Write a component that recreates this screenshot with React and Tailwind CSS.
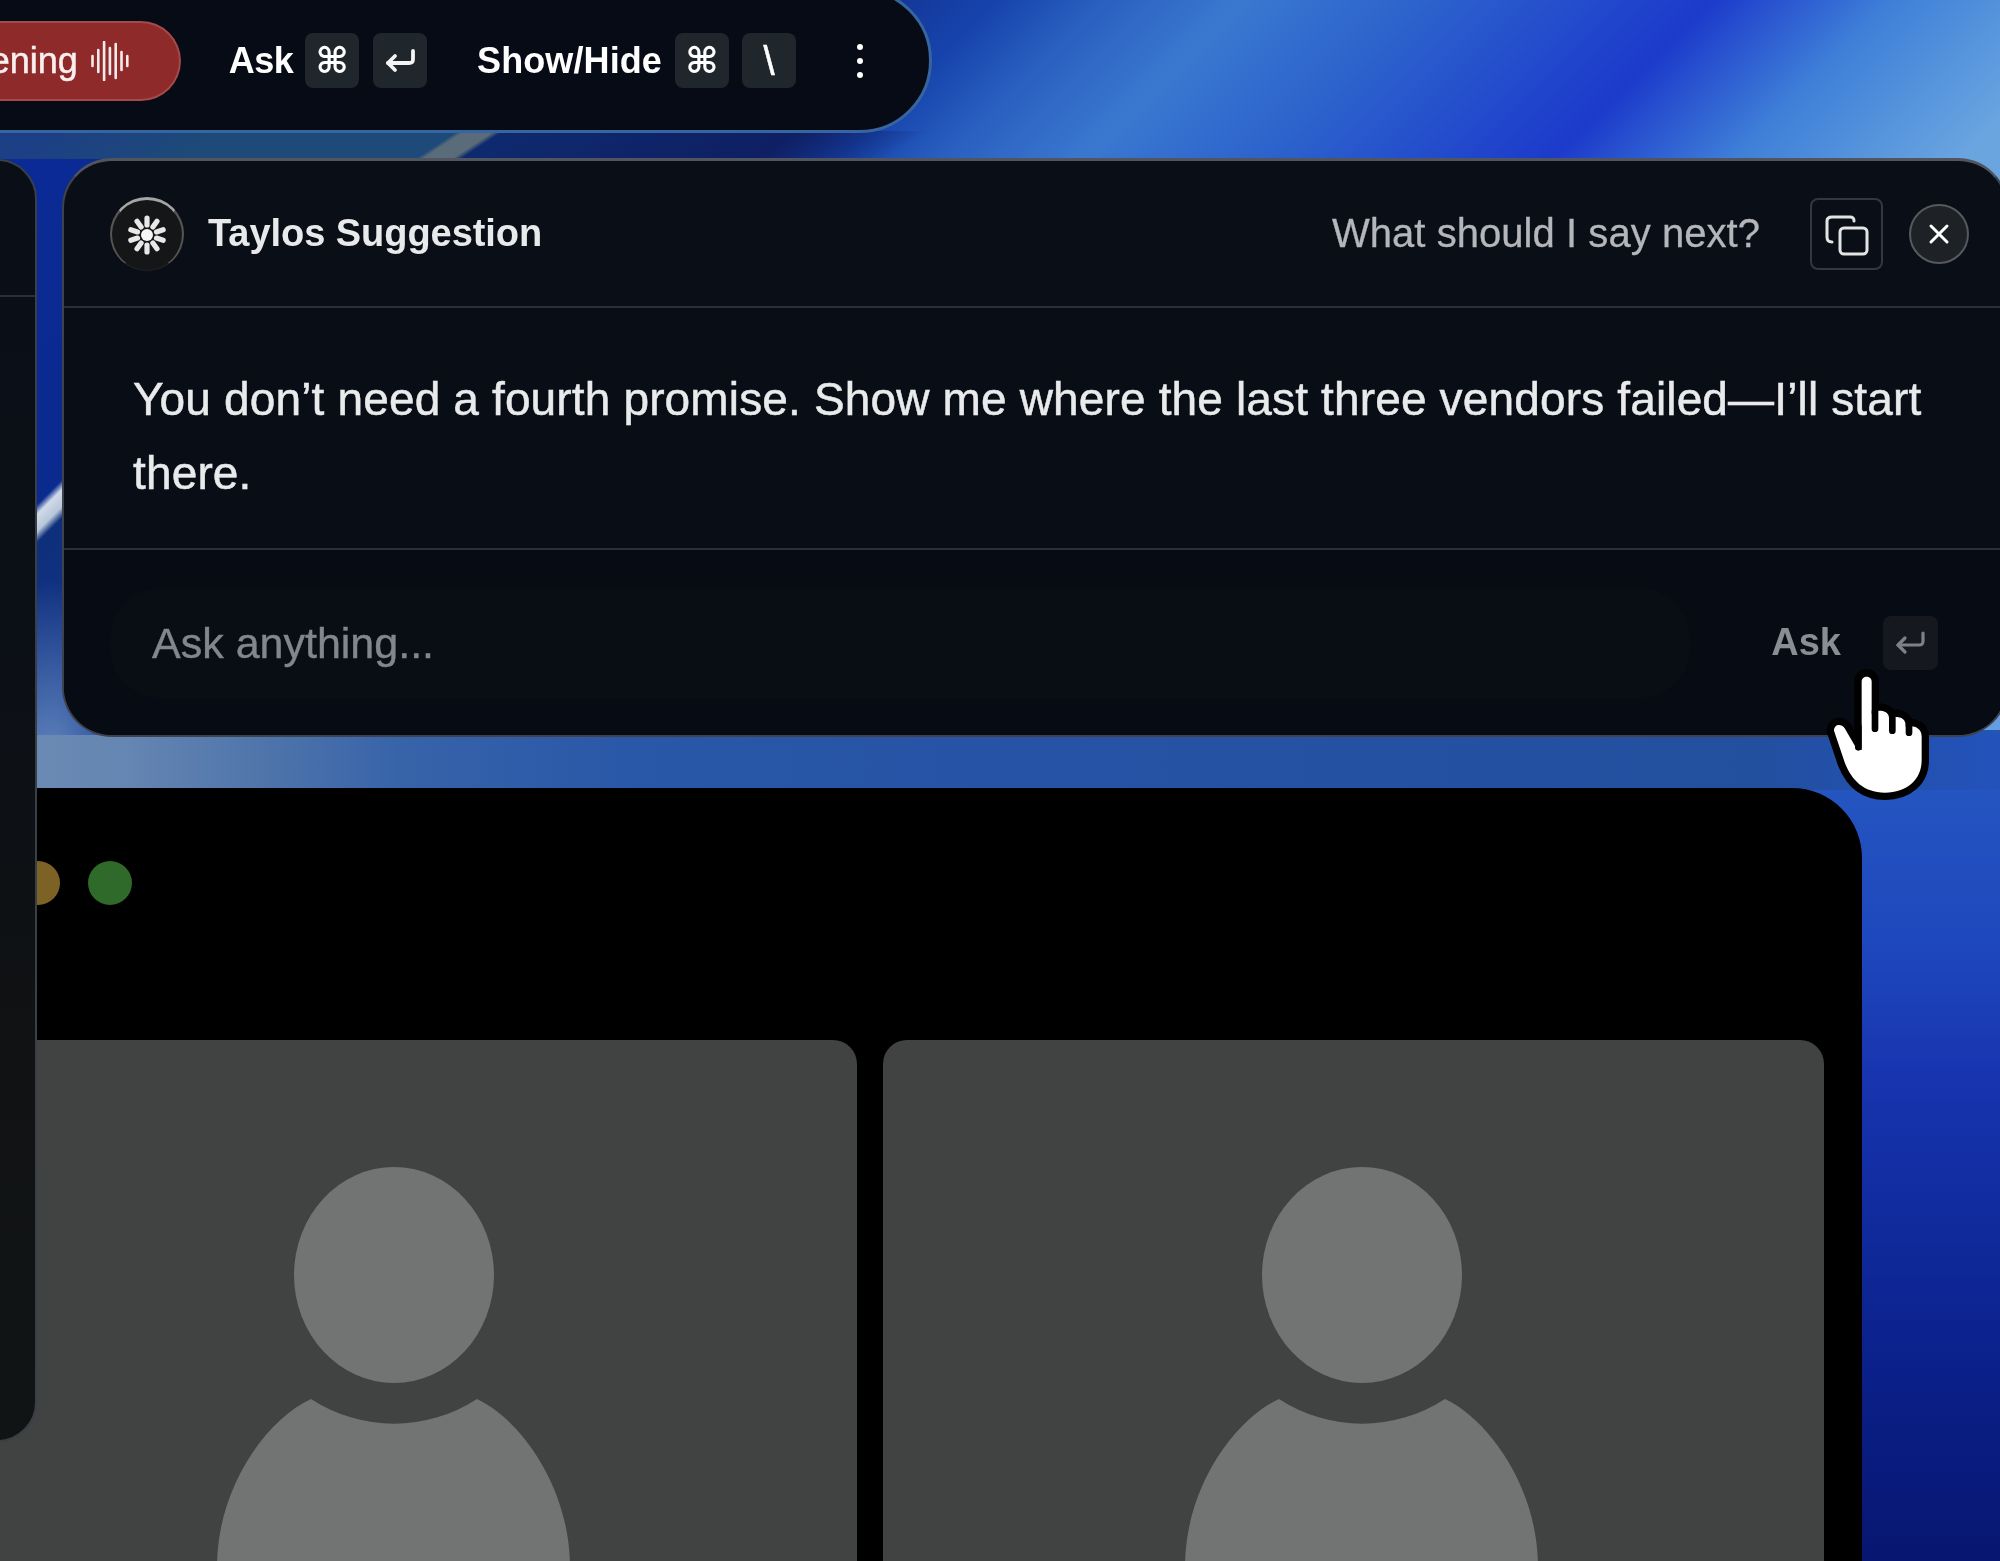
import React from "react";

const sans = "font-['Liberation_Sans',Arial,sans-serif]";

function Key({ children }) {
  return (
    <div className="w-[54px] h-[55px] rounded-[8px] bg-[#1f262c] flex items-center justify-center text-white">
      {children}
    </div>
  );
}

function Cmd() {
  return <span className="font-['DejaVu_Sans',sans-serif] font-bold text-[36px] leading-none">⌘</span>;
}

function Enter({ color, width = 3.8 }) {
  return (
    <svg width="31" height="24" viewBox="0 0 31 24" fill="none" stroke={color} strokeWidth={width} strokeLinecap="round" strokeLinejoin="round">
      <path d="M28 2 V10 C28 13 27 14 24 14 H3" />
      <path d="M10 7 L3 14 L10 21" />
    </svg>
  );
}

function Wave() {
  const bars = [10, 22, 38, 26, 34, 18, 10];
  return (
    <svg width="38" height="40" viewBox="0 0 38 40" className="shrink-0">
      {bars.map((h, i) => (
        <line key={i} x1={1.5 + i * 5.8} x2={1.5 + i * 5.8} y1={20 - h / 2} y2={20 + h / 2} stroke="#f5eaea" strokeWidth="2.6" strokeLinecap="round" />
      ))}
    </svg>
  );
}

function Flower() {
  const petals = Array.from({ length: 10 }, (_, i) => i * 36);
  return (
    <svg width="44" height="44" viewBox="-22 -22 44 44">
      <circle r="6" fill="#f6f6f6" />
      {petals.map((a) => (
        <line key={a} x1="0" y1="-10" x2="0" y2="-17" stroke="#e8e8e8" strokeWidth="5.2" strokeLinecap="round" transform={`rotate(${a})`} />
      ))}
    </svg>
  );
}

function Avatar() {
  return (
    <svg width="353" height="394" viewBox="0 0 353 394" className="block">
      <ellipse cx="177" cy="108" rx="100" ry="108" fill="#727373" />
      <path d="M94 232 A152 152 0 0 0 260 232 C303 252 353 320 353 400 L0 400 C0 320 50 252 94 232 Z" fill="#727373" />
    </svg>
  );
}

function Tile({ width, right }) {
  return (
    <div className={`${width} h-[700px] shrink-0 rounded-[24px] bg-[#414242] flex justify-end`}>
      <div className={`mt-[127px] ${right} h-[394px] overflow-hidden`}>
        <Avatar />
      </div>
    </div>
  );
}

function Hand() {
  return (
    <svg width="350" height="300" viewBox="0 0 1050 900" className="absolute left-[1650px] top-[560px] z-30">
      <path
        d="M552 512 C552 492 574 490 584 505 L622 570 L635 570 L635 365 C635 345 665 345 665 365 L665 462 C672 448 712 448 716 468 L718 478 C728 466 764 468 766 490 L768 503 C780 494 815 498 815 530 L815 600 C815 660 770 698 705 698 C640 698 605 660 585 610 Z"
        fill="#fff"
        stroke="#000"
        strokeWidth="44"
        strokeLinejoin="round"
        paintOrder="stroke"
      />
      <g stroke="#000" strokeWidth="20" strokeLinecap="round">
        <line x1="675" y1="455" x2="675" y2="506" />
        <line x1="727" y1="475" x2="727" y2="512" />
        <line x1="777" y1="495" x2="777" y2="518" />
        <line x1="625" y1="500" x2="625" y2="562" />
      </g>
    </svg>
  );
}

export default function App() {
  return (
    <div
      className={`${sans} relative w-[2000px] h-[1561px] overflow-hidden blur-[0.5px] [background:linear-gradient(146.6deg,#1d3f85_28px,#1d4a78_121px,#1d4a78_252px,#5a6c7a_256px,#5a6c7a_272px,#0e2a6e_277px,#0f1f63_440px,rgba(15,31,99,0)_512px)_0_131px/940px_28px_no-repeat,linear-gradient(90deg,#6a8ab4_40px,#6585b2_130px,#4f75aa_260px,#3763a9_400px,#2a58a8_620px,#2653a5_1000px,#234f9f_1760px,#2352bb_2000px)_0_735px/2000px_55px_no-repeat,linear-gradient(180deg,#2355b5_0px,#2455c0_60px,#1e47bd_220px,#1835b0_340px,#102a9c_500px,#0a1f88_650px,#071670_831px)_1760px_730px/240px_831px_no-repeat,radial-gradient(ellipse_90px_190px_at_50px_770px,rgba(110,145,195,0.9),rgba(110,145,195,0))_0_0/200px_800px_no-repeat,linear-gradient(135deg,#0a2a9a_0px,#0b2a8e_383px,#d0dae8_390px,#b8c6da_402px,#0e2f7a_410px,#15389a_640px,#1644ac_707px,#2a60c0_780px,#3a78d0_877px,#2c62cc_1010px,#1c3acb_1210px,#3f80d8_1340px,#6aa5e0_1500px,#5a96dc_2518px)]`}
    >
      {/* top bar */}
      <div className="absolute left-[-80px] top-[-12px] w-[1012px] h-[145px] rounded-full bg-[#070b15] border-[3px] border-[#36659f] flex items-center justify-end pr-[66px] z-10">
        <div className="flex items-center">
          <div className="h-[80px] w-[300px] rounded-r-[40px] bg-[#8f2a2a] border-2 border-l-0 border-[#a34a4a] flex items-center justify-end pr-[50px] gap-[13px] text-[#f8efef] text-[36px] mr-[48px]">
            <span className="[-webkit-text-stroke:0.5px]">Listening</span>
            <Wave />
          </div>
          <span className="text-white text-[36px] font-bold tracking-[-0.6px] mr-[12px]">Ask</span>
          <Key><Cmd /></Key>
          <div className="ml-[14px]"><Key><Enter color="#f4f4f4" /></Key></div>
          <span className="text-white text-[36px] font-bold tracking-[0.1px] ml-[50px] mr-[13px]">Show/Hide</span>
          <Key><Cmd /></Key>
          <div className="ml-[13px]"><Key><span className="text-[40px] leading-none [-webkit-text-stroke:0.6px]">\</span></Key></div>
          <div className="ml-[61px] flex flex-col gap-[8px]">
            <span className="w-[6px] h-[6px] rounded-full bg-white" />
            <span className="w-[6px] h-[6px] rounded-full bg-white" />
            <span className="w-[6px] h-[6px] rounded-full bg-white" />
          </div>
        </div>
      </div>

      {/* meeting window */}
      <div className="absolute left-[-100px] top-[788px] w-[1962px] h-[900px] bg-black rounded-tr-[70px] pt-[252px] z-0">
        <div className="flex gap-[26px]">
          <Tile width="w-[957px]" right="mr-[287px]" />
          <Tile width="w-[941px]" right="mr-[286px]" />
        </div>
        {/* traffic lights */}
        <div className="absolute left-[116px] top-[73px] flex gap-[28px]">
          <span className="w-[44px] h-[44px] rounded-full bg-[#7d6226]" />
          <span className="w-[44px] h-[44px] rounded-full bg-[#2f6a2a]" />
        </div>
      </div>

      {/* left panel */}
      <div className="absolute left-[-200px] top-[159px] w-[237px] h-[1283px] rounded-[40px] border-2 border-[#3a3e46] bg-[linear-gradient(180deg,#0a0e17_0%,#0b0f16_35%,#101213_70%,#111415_100%)] z-10">
        <div className="mt-[134px] h-[2px] bg-[#2b2f36]" />
      </div>

      {/* suggestion panel */}
      <div className="absolute left-[62px] top-[158px] w-[1946px] h-[579px] rounded-[50px] border-2 border-[#3d424d] border-t-[3px] border-t-[#50555f] bg-[#0a0e17] flex flex-col z-20">
        <div className="h-[147px] shrink-0 border-b-2 border-[#2b2f38] flex items-center pl-[46px] pr-[37px]">
          <div className="w-[74px] h-[74px] rounded-full bg-[#151617] border-t-[3px] border-x-2 border-b border-t-[#a5a5a5] border-x-[#555] border-b-[#222] flex items-center justify-center shrink-0">
            <Flower />
          </div>
          <span className="ml-[24px] text-[#e8e9ea] text-[38px] font-bold tracking-[-0.05px]">Taylos Suggestion</span>
          <span className="ml-auto mb-[2px] text-[#b4b6bb] text-[40px] tracking-[0.05px] [-webkit-text-stroke:0.3px]">What should I say next?</span>
          <button className="ml-[50px] w-[73px] h-[72px] rounded-[8px] border-2 border-[#33383f] flex items-center justify-center">
            <svg width="44" height="44" viewBox="0 0 44 44" fill="none" stroke="#e4e4e4" strokeWidth="3" strokeLinecap="round" strokeLinejoin="round">
              <rect x="15" y="16" width="27" height="26" rx="4" />
              <path d="M7 30 C3 30 2 28 2 25 V9 C2 6 4 5 7 5 H25 C28 5 29 6 29 9" />
            </svg>
          </button>
          <button className="ml-[26px] w-[60px] h-[60px] rounded-full bg-[#1e2126] border-2 border-[#56595e] flex items-center justify-center">
            <svg width="22" height="22" viewBox="0 0 22 22" stroke="#fff" strokeWidth="3" strokeLinecap="round">
              <line x1="3" y1="3" x2="19" y2="19" />
              <line x1="19" y1="3" x2="3" y2="19" />
            </svg>
          </button>
        </div>
        <div className="h-[242px] shrink-0 border-b-2 border-[#2b2f38] bg-[#090d16] pl-[69px] pr-[40px] pt-[54px]">
          <p className="text-[#e9eaeb] text-[46px] leading-[74px] tracking-[0.15px] [-webkit-text-stroke:0.5px]">
            You don’t need a fourth promise. Show me where the last three vendors failed—I’ll start there.
          </p>
        </div>
        <div className="flex-1 bg-[#070b13] rounded-b-[48px] flex items-center pl-[46px] pr-[68px]">
          <div className="w-[1580px] h-[110px] rounded-[50px] bg-[#090d14] flex items-center pl-[42px] pt-[2px] text-[#83868a] text-[43px] [-webkit-text-stroke:0.4px]">
            Ask anything...
          </div>
          <span className="ml-auto text-[#8a8d93] text-[38px] font-bold">Ask</span>
          <div className="ml-[42px] w-[55px] h-[54px] rounded-[8px] bg-[#15191f] flex items-center justify-center">
            <Enter color="#7e8187" width={3.2} />
          </div>
        </div>
      </div>

      <Hand />
    </div>
  );
}
